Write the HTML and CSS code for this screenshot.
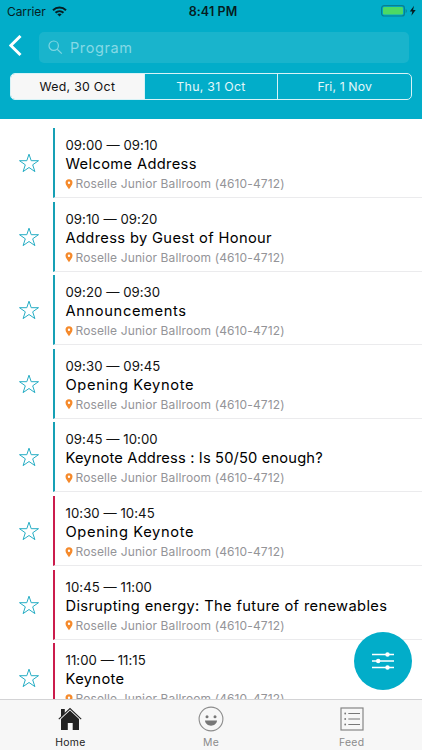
FILE: index.html
```html
<!DOCTYPE html>
<html lang="en">
<head>
<meta charset="utf-8">
<title>Program</title>
<link rel="stylesheet" href="styles.css">
</head>
<body>
<svg class="defs" aria-hidden="true">
  <symbol id="star" viewBox="0 0 20 20"><path d="M10 1.2 12.2 7.7H19.500L13.700 11.800 15.900 18.600 10 14.500 4.100 18.600 6.300 11.800 .5 7.700H7.800Z" fill="none" stroke="#25adc4" stroke-width="1" stroke-linejoin="miter"/></symbol>
  <symbol id="pin" viewBox="0 0 8 11"><path fill-rule="evenodd" d="M4 .3A3.5 3.5 0 0 0 .5 3.8C.5 6 2.8 8.200 4 10.300 5.200 8.200 7.500 6 7.500 3.800A3.500 3.500 0 0 0 4 .3ZM4 2.600a1.200 1.200 0 1 1 0 2.400 1.200 1.200 0 0 1 0-2.400Z" fill="#f58a2c"/></symbol>
</svg>
<div class="screen">
  <header class="header">
    <div class="status">
      <div class="carrier"><span>Carrier</span>
        <svg class="wifi" width="15" height="11" viewBox="0 0 15 11"><g fill="none" stroke="#061d22" stroke-width="2"><path d="M1 4.2C4.7.6 10.3.6 14 4.2"/><path d="M3.5 6.8c2.3-2.2 5.7-2.2 8 0"/></g><path d="M5.3 8.2c1.3-1.1 3.1-1.1 4.4 0L7.5 10.6Z" fill="#061d22"/></svg>
      </div>
      <div class="clock">8:41 PM</div>
      <div class="power">
        <svg width="36" height="12" viewBox="0 0 36 12"><rect x=".6" y=".6" width="22.8" height="10.4" rx="2.6" fill="none" stroke="#087f91" stroke-width="1.2"/><rect x="2" y="2" width="20" height="7.6" rx="1.3" fill="#4cd964"/><path d="M24.700 4v4c1.400-.6 1.400-3.400 0-4Z" fill="#087f91"/><path d="M33 .8 28.800 6.400h2.500L30.400 10.800 34.700 5h-2.600Z" fill="#061d22"/></svg>
      </div>
    </div>
    <div class="search-row">
      <svg class="back" width="14" height="22" viewBox="0 0 14 22"><path d="M11.500 1 1.800 10.500 11.500 20" fill="none" stroke="#fff" stroke-width="3"/></svg>
      <div class="search">
        <svg width="15" height="15" viewBox="0 0 15 15"><g fill="none" stroke="#7fd5e2" stroke-width="1.2"><circle cx="5.7" cy="5.7" r="4.7"/><path d="m9.200 9.200 4.600 4.400"/></g></svg>
        <span>Program</span>
      </div>
    </div>
    <div class="tabs">
      <div class="tab active">Wed, 30 Oct</div>
      <div class="tab">Thu, 31 Oct</div>
      <div class="tab last">Fri, 1 Nov</div>
    </div>
  </header>
  <main class="list">
    <article class="row"><svg class="star"><use href="#star"/></svg><div class="session"><div class="time">09:00 — 09:10</div><div class="title">Welcome Address</div><div class="place"><svg class="pin"><use href="#pin"/></svg>Roselle Junior Ballroom (4610-4712)</div></div></article>
    <article class="row"><svg class="star"><use href="#star"/></svg><div class="session"><div class="time">09:10 — 09:20</div><div class="title">Address by Guest of Honour</div><div class="place"><svg class="pin"><use href="#pin"/></svg>Roselle Junior Ballroom (4610-4712)</div></div></article>
    <article class="row"><svg class="star"><use href="#star"/></svg><div class="session"><div class="time">09:20 — 09:30</div><div class="title loose">Announcements</div><div class="place"><svg class="pin"><use href="#pin"/></svg>Roselle Junior Ballroom (4610-4712)</div></div></article>
    <article class="row"><svg class="star"><use href="#star"/></svg><div class="session"><div class="time">09:30 — 09:45</div><div class="title loose">Opening Keynote</div><div class="place"><svg class="pin"><use href="#pin"/></svg>Roselle Junior Ballroom (4610-4712)</div></div></article>
    <article class="row"><svg class="star"><use href="#star"/></svg><div class="session"><div class="time">09:45 — 10:00</div><div class="title tight">Keynote Address : Is 50/50 enough?</div><div class="place"><svg class="pin"><use href="#pin"/></svg>Roselle Junior Ballroom (4610-4712)</div></div></article>
    <article class="row red"><svg class="star"><use href="#star"/></svg><div class="session"><div class="time">10:30 — 10:45</div><div class="title loose">Opening Keynote</div><div class="place"><svg class="pin"><use href="#pin"/></svg>Roselle Junior Ballroom (4610-4712)</div></div></article>
    <article class="row red"><svg class="star"><use href="#star"/></svg><div class="session"><div class="time">10:45 — 11:00</div><div class="title">Disrupting energy: The future of renewables</div><div class="place"><svg class="pin"><use href="#pin"/></svg>Roselle Junior Ballroom (4610-4712)</div></div></article>
    <article class="row red"><svg class="star"><use href="#star"/></svg><div class="session"><div class="time">11:00 — 11:15</div><div class="title">Keynote</div><div class="place"><svg class="pin"><use href="#pin"/></svg>Roselle Junior Ballroom (4610-4712)</div></div></article>
  </main>
  <nav class="nav">
    <div class="nav-item current">
      <svg width="24" height="24" viewBox="0 0 24 24"><path d="M3 2h3.800v4.500L3 10Z" fill="#222"/><path d="M.8 12.200 12 1.500l11.200 10.700" fill="none" stroke="#222" stroke-width="1.100"/><path d="M3 12 12 3.600l9 8.400V23h-6.300v-7H9.800v7H3Z" fill="#222"/></svg>
      <span>Home</span>
    </div>
    <div class="nav-item">
      <svg width="26" height="26" viewBox="0 0 26 26"><circle cx="13" cy="13" r="11.900" fill="none" stroke="#8c8c8c" stroke-width="1.100"/><g fill="#777"><circle cx="9" cy="10.800" r="1.500"/><circle cx="17" cy="10.800" r="1.500"/><path d="M7 14.600h12c-.5 6.800-11.500 6.800-12 0Z"/></g></svg>
      <span>Me</span>
    </div>
    <div class="nav-item">
      <svg width="24" height="24" viewBox="0 0 24 24"><rect x="1" y="1" width="22" height="22" fill="none" stroke="#858585" stroke-width="1.200"/><path d="M8.300 6.500H20M8.300 12H20M8.300 17.500H20" stroke="#777"/><g fill="#777"><circle cx="5.200" cy="6.500" r=".9"/><circle cx="5.200" cy="12" r=".9"/><circle cx="5.200" cy="17.500" r=".9"/></g></svg>
      <span>Feed</span>
    </div>
  </nav>
  <div class="filter">
    <svg width="22" height="18" viewBox="0 0 22 18"><path d="M0 2.500h22M0 9h22M0 15.500h22" stroke="#fff" stroke-width="1.500"/><g fill="#fff"><circle cx="15.500" cy="2.500" r="2.200"/><circle cx="6.200" cy="9" r="2.200"/><circle cx="15.500" cy="15.500" r="2.200"/></g></svg>
  </div>
</div>
</body>
</html>
```
FILE: styles.css
```css
* { box-sizing: border-box; }
body { margin: 0; font-family: Inter, "Liberation Sans", sans-serif; background: #fff; }
svg { display: block; flex: none; }
.defs { position: absolute; width: 0; height: 0; }
.screen { position: relative; display: flex; flex-direction: column; width: 422px; height: 750px; overflow: hidden; white-space: nowrap; }

.header { flex: none; height: 118.500px; background: #02adc9; }
.status { display: grid; grid-template-columns: 1fr auto 1fr; align-items: center; height: 22px; padding: 0 5px 0 7px; color: #061d22; font-size: 12px; }
.carrier { display: flex; align-items: center; gap: 6px; letter-spacing: -.1px; }
.clock { font-size: 12.500px; font-weight: 600; letter-spacing: .1px; padding-left: 2px; }
.power { display: flex; justify-content: flex-end; }

.search-row { display: flex; align-items: center; gap: 16px; margin-top: 10px; padding: 0 13px 0 9px; height: 31px; }
.back { margin-top: -3px; }
.search { flex: 1; display: flex; align-items: center; gap: 7px; height: 31px; padding-left: 9px; border-radius: 5px; background: #19b4cc; color: #85d9e5; font-size: 14.500px; letter-spacing: .6px; }

.tabs { display: flex; height: 27px; margin: 10px 10px 0; border: 1.500px solid #d8f3f7; border-radius: 5px; overflow: hidden; }
.tab { flex: 1; display: flex; align-items: center; justify-content: center; color: #e3f7fa; font-size: 12.300px; letter-spacing: .3px; border-left: 1px solid #d8f3f7; }
.tab:first-child { border-left: 0; }
.tab.active { background: #f7f7f7; color: #111; }
.tab.last { letter-spacing: .1px; }

.list { flex: 1; min-height: 0; overflow: hidden; padding-top: 6px; }
.row { display: flex; height: 73.600px; padding-top: 3.600px; }
.star { width: 20px; height: 20px; margin: 25px 15px 0 19px; }
.session { position: relative; flex: 1; margin-left: -1px; height: 70px; padding: 8px 0 0 10.500px; border-left: 2px solid #16a0b5; border-bottom: 1px solid #ebebed; }
.red .session { border-left-color: #cb1c4c; }
.time { font-size: 13.200px; line-height: 18px; color: #111; letter-spacing: .05px; }
.title { font-size: 14.700px; line-height: 20px; font-weight: 400; color: #000; letter-spacing: .35px; }
.title.tight { letter-spacing: .15px; }
.title.loose { letter-spacing: .62px; }
.place { display: flex; align-items: center; gap: 3px; line-height: 20px; font-size: 12px; letter-spacing: .12px; color: #949498; }
.pin { width: 8px; height: 11px; margin-left: -1px; }

.nav { flex: none; display: grid; grid-template-columns: repeat(3, 1fr); height: 51px; border-top: 1px solid #d3d3d5; background: #f7f7f7; }
.nav-item { display: grid; grid-template-rows: 37px 12px; justify-items: center; align-items: center; font-size: 10.400px; line-height: 12px; letter-spacing: .3px; color: #8b8b8b; }
.current { color: #222; }
.filter { position: absolute; left: 354px; top: 632px; width: 58px; height: 58px; border-radius: 50%; background: #02adc9; display: flex; align-items: center; justify-content: center; }
```
